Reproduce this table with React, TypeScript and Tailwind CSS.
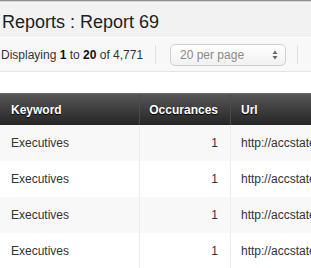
import React from "react";

const rows = [0, 1, 2, 3];

export default function App() {
  return (
    <div className="w-[311px] h-[268px] overflow-hidden bg-white font-['Liberation_Sans',Arial,sans-serif] text-[#333]">
      <div className="h-[1px] bg-[#8f8f8f]" />
      <div className="h-[1px] bg-[#d6d6d6]" />
      <div className="h-[36px] bg-[#f2f2f2] border-b border-white flex items-center pl-[2px] pt-[4px]">
        <h1 className="text-[18px] leading-none text-[#1e1e1e] whitespace-nowrap">Reports : Report 69</h1>
      </div>
      <div className="h-[34px] bg-[#f8f8f8] border-b border-[#e4e4e4] flex items-center whitespace-nowrap text-[12px]">
        <div className="pl-[1px] w-[155px] text-[#333]">
          Displaying <b className="text-[#111]">1</b> to <b className="text-[#111]">20</b> of 4,771
        </div>
        <div className="w-px h-[19px] bg-[#e0e0e0]" />
        <div className="ml-[14px] w-[116px] h-[22px] rounded-[5px] border border-[#cfcfcf] bg-gradient-to-b from-white to-[#f1f1f1] flex items-center pl-[9px] pr-[7px] shadow-[inset_0_1px_0_#fff]">
          <span className="text-[#8a8a8a] text-[12px] flex-1">20 per page</span>
          <svg width="6" height="10" viewBox="0 0 6 10">
            <path d="M3 0.5 L5.5 4 L0.5 4 Z" fill="#666" />
            <path d="M3 9.5 L5.5 6 L0.5 6 Z" fill="#666" />
          </svg>
        </div>
        <div className="ml-[11px] w-px h-[19px] bg-[#e0e0e0]" />
      </div>
      <div className="h-[21px]" />
      <div className="w-[480px] text-[12px]">
        <div className="h-[32px] grid grid-cols-[140px_91px_1fr] bg-gradient-to-b from-[#575757] to-[#262626] border-t border-[#6a6a6a] text-white font-bold [text-shadow:0_1px_1px_#000]">
          <div className="flex items-center pl-[11px] border-r border-[#4a4a4a]">Keyword</div>
          <div className="flex items-center justify-end pr-[12px] border-r border-[#4a4a4a]">Occurances</div>
          <div className="flex items-center pl-[10px]">Url</div>
        </div>
        {rows.map((i) => (
          <div
            key={i}
            className={`h-[36px] grid grid-cols-[140px_91px_1fr] ${i % 2 === 0 ? "bg-[#f8f8f8]" : "bg-white"}`}
          >
            <div className="flex items-center pl-[11px] border-r border-[#ececec]">Executives</div>
            <div className="flex items-center justify-end pr-[12px] border-r border-[#ececec]">1</div>
            <div className="flex items-center pl-[10px] whitespace-nowrap">http://accstate.gov/executives</div>
          </div>
        ))}
      </div>
    </div>
  );
}
